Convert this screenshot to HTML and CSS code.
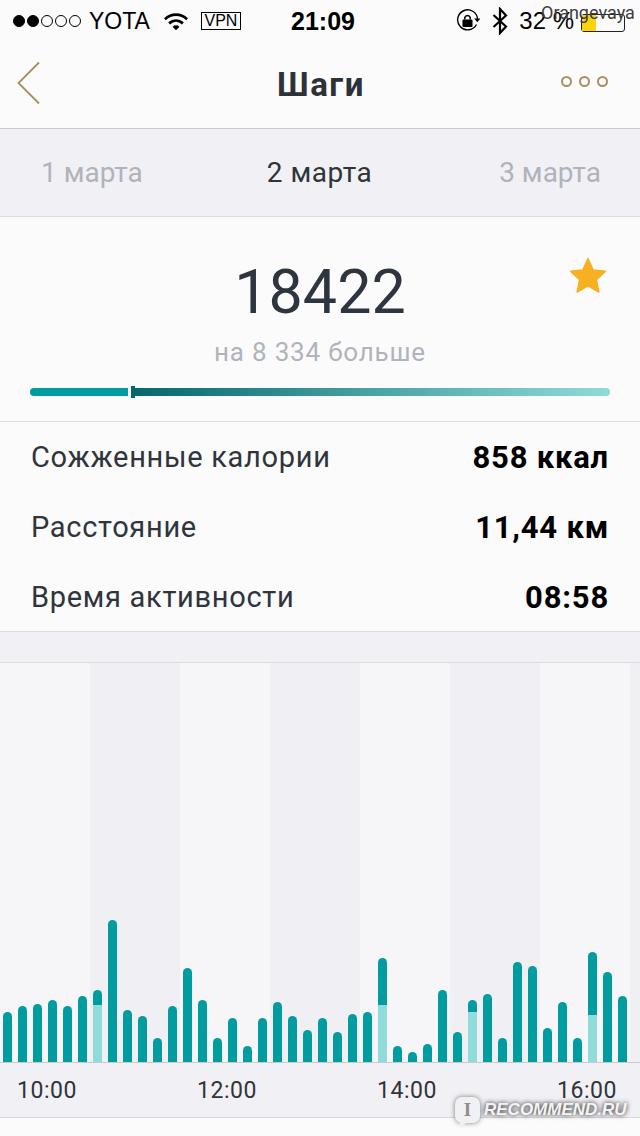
FILE: index.html
```html
<!DOCTYPE html>
<html lang="ru">
<head>
    <meta charset="UTF-8">
    <meta name="viewport" content="width=device-width, initial-scale=1.0">
    <title>Шаги</title>
    <link rel="stylesheet" href="styles.css">
</head>
<body>

    <div class="status-bar">
        <div class="status-left">
            <span class="signal">
                <i class="dot full"></i><i class="dot full"></i><i class="dot"></i><i class="dot"></i><i class="dot"></i>
            </span>
            <span class="carrier">YOTA</span>
            <svg class="wifi" width="24" height="19" viewBox="0 0 26 20">
                <path d="M1 7.5C8 1 18 1 25 7.5" fill="none" stroke="#000" stroke-width="3"/>
                <path d="M5.5 12C10 8 16 8 20.5 12" fill="none" stroke="#000" stroke-width="3"/>
                <path d="M9.2 15.6C11.5 13.6 14.5 13.6 16.8 15.6L13 19.5Z" fill="#000"/>
            </svg>
            <span class="vpn">VPN</span>
        </div>
        <div class="status-time">21:09</div>
        <div class="status-right">
            <svg class="rotation" width="24" height="24" viewBox="0 0 24 24">
                <path d="M20.5 15.5A10 10 0 1 1 21.6 10" fill="none" stroke="#000" stroke-width="1.4"/>
                <path d="M18.2 9.5H24.4L21.3 13.2Z" fill="#000"/>
                <rect x="6.5" y="10.5" width="10" height="7.5" rx="1" fill="#000"/>
                <path d="M8.8 10.5V8.5A2.8 2.8 0 0 1 14.2 8.5V10.5" fill="none" stroke="#000" stroke-width="1.5"/>
            </svg>
            <svg class="bluetooth" width="16" height="28" viewBox="0 0 16 28">
                <path d="M1.5 8L14 19.5L8 26V2L14 8.5L1.5 20" fill="none" stroke="#000" stroke-width="2.2"/>
            </svg>
            <span class="percent">32 %</span>
            <span class="battery"><i class="battery-level"></i></span>
        </div>
        <span class="author-mark">Orangevaya</span>
    </div>

    <div class="nav-bar">
        <svg class="back" width="24" height="44" viewBox="0 0 24 44">
            <path d="M22 1.5L1.5 22L22 42.5" fill="none" stroke="#a88f5f" stroke-width="1.8"/>
        </svg>
        <h1 class="nav-title">Шаги</h1>
        <div class="more"><i></i><i></i><i></i></div>
    </div>

    <div class="date-row">
        <span class="date">1 марта</span>
        <span class="date current">2 марта</span>
        <span class="date">3 марта</span>
    </div>

    <div class="summary">
        <div class="steps">18422</div>
        <div class="steps-diff">на 8 334 больше</div>
        <svg class="star" width="38" height="38" viewBox="0 0 38 38">
            <path d="M19 1.5L24.2 13L36.5 14.3L27.4 22.7L29.9 35L19 28.8L8.1 35L10.6 22.7L1.5 14.3L13.8 13Z" fill="#f6b021" stroke="#f6b021" stroke-width="1.5" stroke-linejoin="round"/>
        </svg>
        <div class="progress">
            <div class="progress-done"></div>
            <div class="progress-mark"></div>
            <div class="progress-rest"></div>
        </div>
    </div>

    <div class="stats">
        <div class="stat-row"><span>Сожженные калории</span><b>858 ккал</b></div>
        <div class="stat-row"><span>Расстояние</span><b>11,44 км</b></div>
        <div class="stat-row"><span>Время активности</span><b>08:58</b></div>
    </div>

    <div class="gap"></div>

    <div class="chart">
        <div class="bar" style="height:50px"></div>
        <div class="bar" style="height:56px"></div>
        <div class="bar" style="height:58px"></div>
        <div class="bar" style="height:62px"></div>
        <div class="bar" style="height:56px"></div>
        <div class="bar" style="height:66px"></div>
        <div class="bar" style="height:72px"><div class="bar-low" style="height:57px"></div></div>
        <div class="bar" style="height:142px"></div>
        <div class="bar" style="height:52px"></div>
        <div class="bar" style="height:46px"></div>
        <div class="bar" style="height:24px"></div>
        <div class="bar" style="height:56px"></div>
        <div class="bar" style="height:94px"></div>
        <div class="bar" style="height:62px"></div>
        <div class="bar" style="height:24px"></div>
        <div class="bar" style="height:44px"></div>
        <div class="bar" style="height:16px"></div>
        <div class="bar" style="height:44px"></div>
        <div class="bar" style="height:60px"></div>
        <div class="bar" style="height:46px"></div>
        <div class="bar" style="height:32px"></div>
        <div class="bar" style="height:44px"></div>
        <div class="bar" style="height:30px"></div>
        <div class="bar" style="height:48px"></div>
        <div class="bar" style="height:50px"></div>
        <div class="bar" style="height:104px"><div class="bar-low" style="height:57px"></div></div>
        <div class="bar" style="height:16px"></div>
        <div class="bar" style="height:10px"></div>
        <div class="bar" style="height:18px"></div>
        <div class="bar" style="height:72px"></div>
        <div class="bar" style="height:30px"></div>
        <div class="bar" style="height:62px"><div class="bar-low" style="height:50px"></div></div>
        <div class="bar" style="height:68px"></div>
        <div class="bar" style="height:24px"></div>
        <div class="bar" style="height:100px"></div>
        <div class="bar" style="height:96px"></div>
        <div class="bar" style="height:34px"></div>
        <div class="bar" style="height:60px"></div>
        <div class="bar" style="height:24px"></div>
        <div class="bar" style="height:110px"><div class="bar-low" style="height:47px"></div></div>
        <div class="bar" style="height:90px"></div>
        <div class="bar" style="height:66px"></div>
    </div>

    <div class="axis">
        <span>10:00</span>
        <span>12:00</span>
        <span>14:00</span>
        <span>16:00</span>
    </div>

    <div class="site-mark">
        <span class="site-icon">I</span>
        <span class="site-name">RECOMMEND.RU</span>
    </div>

</body>
</html>
```

FILE: styles.css
```css
* {
    box-sizing: border-box;
}

body {
    font-family: Roboto, Arial, sans-serif;
    background-color: #fbfbfc;
    margin: 0;
    padding: 0;
    width: 640px;
    height: 1136px;
    overflow: hidden;
    position: relative;
}

/* status bar */
.status-bar {
    height: 40px;
    padding: 2px 15px 0 13px;
    display: flex;
    align-items: center;
    position: relative;
    font-family: "Liberation Sans", Arial, sans-serif;
    font-size: 25px;
    color: #000;
}

.status-left,
.status-right {
    display: flex;
    align-items: center;
}

.status-left {
    width: 278px;
}

.status-right {
    flex: 1;
    justify-content: flex-end;
}

.status-time {
    font-weight: bold;
    font-size: 25px;
    width: 64px;
}

.signal {
    display: flex;
    gap: 2px;
}

.dot {
    width: 12px;
    height: 12px;
    border: 1px solid #000;
    border-radius: 50%;
}

.dot.full {
    background-color: #000;
}

.carrier {
    margin-left: 8px;
    font-size: 23px;
}

.wifi {
    margin-left: 14px;
}

.vpn {
    margin-left: 13px;
    width: 40px;
    height: 18px;
    border: 1px solid #000;
    font-size: 16px;
    line-height: 16px;
    text-align: center;
}

.bluetooth {
    margin-left: 12px;
}

.percent {
    margin-left: 11px;
    font-size: 24px;
}

.battery {
    margin-left: 7px;
    width: 44px;
    height: 18px;
    margin-top: 4px;
    border: 1px solid #222;
    border-radius: 3px;
    display: block;
}

.battery-level {
    display: block;
    width: 14px;
    height: 16px;
    background-color: #fbd40b;
}

.author-mark {
    position: absolute;
    left: 541px;
    top: 1px;
    font-family: Roboto, Arial, sans-serif;
    font-size: 18px;
    line-height: 24px;
    color: #3d3d3d;
}

/* nav */
.nav-bar {
    height: 89px;
    padding: 21px 32px 0 17px;
    border-bottom: 1px solid #c9c9ce;
    display: flex;
    justify-content: space-between;
    position: relative;
}

.nav-title {
    position: absolute;
    left: 2px;
    right: 0;
    top: 23px;
    margin: 0;
    text-align: center;
    font-size: 33px;
    line-height: 44px;
    font-weight: 700;
    letter-spacing: 1.5px;
    color: #2d3138;
}

.back {
    display: block;
}

.more {
    display: flex;
    gap: 7px;
    margin-top: 15px;
}

.more i {
    width: 11px;
    height: 11px;
    border: 2px solid #a88f5f;
    border-radius: 50%;
}

/* dates */
.date-row {
    height: 88px;
    background-color: #f1f1f5;
    border-bottom: 1px solid #dedee2;
    padding: 0 39px 0 41px;
    display: flex;
    align-items: center;
    justify-content: space-between;
    font-size: 28px;
    color: #b0b3bb;
}

.date.current {
    color: #2f333a;
    letter-spacing: 0.5px;
    margin-left: -3px;
}

/* summary */
.summary {
    height: 205px;
    position: relative;
    border-bottom: 1px solid #dcdcdf;
    text-align: center;
}

.steps {
    padding-top: 38px;
    font-size: 61px;
    line-height: 74px;
    color: #2f353e;
}

.steps-diff {
    margin-top: 8px;
    font-size: 26px;
    line-height: 30px;
    letter-spacing: 0.8px;
    color: #b0b3bb;
}

.star {
    position: absolute;
    left: 569px;
    top: 40px;
}

.progress {
    position: absolute;
    left: 30px;
    right: 30px;
    top: 171px;
    height: 8px;
    display: flex;
}

.progress-done {
    width: 98px;
    background-color: #009c9f;
    border-radius: 4px 0 0 4px;
}

.progress-mark {
    width: 4px;
    height: 12px;
    margin: -2px 0 0 3px;
    background-color: #04686d;
}

.progress-rest {
    flex: 1;
    background: linear-gradient(to right, #04686d, #8fdcda);
    border-radius: 0 4px 4px 0;
}

/* stats */
.stats {
    height: 210px;
    padding: 0 31px;
    border-bottom: 1px solid #dcdcdf;
}

.stat-row {
    height: 70px;
    display: flex;
    align-items: center;
    justify-content: space-between;
    font-size: 29px;
    letter-spacing: 0.7px;
    color: #30343b;
}

.stat-row b {
    color: #000;
    font-size: 31px;
    font-weight: 700;
    letter-spacing: 0.8px;
}

.gap {
    height: 31px;
    background-color: #f1f1f5;
    border-bottom: 1px solid #dcdcdf;
}

/* chart */
.chart {
    height: 400px;
    padding-left: 3px;
    display: flex;
    align-items: flex-end;
    gap: 6px;
    border-bottom: 1px solid #c9c9ce;
    background: repeating-linear-gradient(to right, #f6f6f9 0, #f6f6f9 90px, #efeff4 90px, #efeff4 180px);
}

.bar {
    width: 9px;
    flex-shrink: 0;
    background-color: #009c9f;
    border-radius: 5px 5px 0 0;
    display: flex;
    align-items: flex-end;
}

.bar-low {
    width: 9px;
    background-color: #8fdcda;
}

.axis {
    height: 55px;
    background-color: #f1f1f5;
    border-bottom: 1px solid #d8d8dc;
    display: flex;
    gap: 88px;
    padding: 14px 0 0 1px;
    font-size: 23px;
    letter-spacing: 0.5px;
    line-height: 28px;
    color: #30343b;
}

.axis span {
    width: 92px;
    text-align: center;
}

/* watermark */
.site-mark {
    position: absolute;
    left: 455px;
    top: 1097px;
    display: flex;
    align-items: center;
    gap: 4px;
}

.site-icon {
    width: 25px;
    height: 26px;
    border-radius: 7px;
    background-color: #f1f1f3;
    box-shadow: 0 0 5px rgba(0, 0, 0, 0.5);
    text-align: center;
    font-family: "Liberation Serif", serif;
    font-weight: bold;
    font-size: 19px;
    line-height: 26px;
    color: #8d8d8d;
    position: relative;
}

.site-icon::after {
    content: "";
    position: absolute;
    left: 5px;
    top: 25px;
    border-top: 6px solid #f1f1f3;
    border-right: 7px solid transparent;
}

.site-name {
    font-family: "Liberation Sans", Arial, sans-serif;
    font-size: 17px;
    font-weight: bold;
    font-style: italic;
    color: #f4f4f4;
    text-shadow: 0 0 4px rgba(0, 0, 0, 0.7), 0 0 6px rgba(0, 0, 0, 0.4);
}
```
